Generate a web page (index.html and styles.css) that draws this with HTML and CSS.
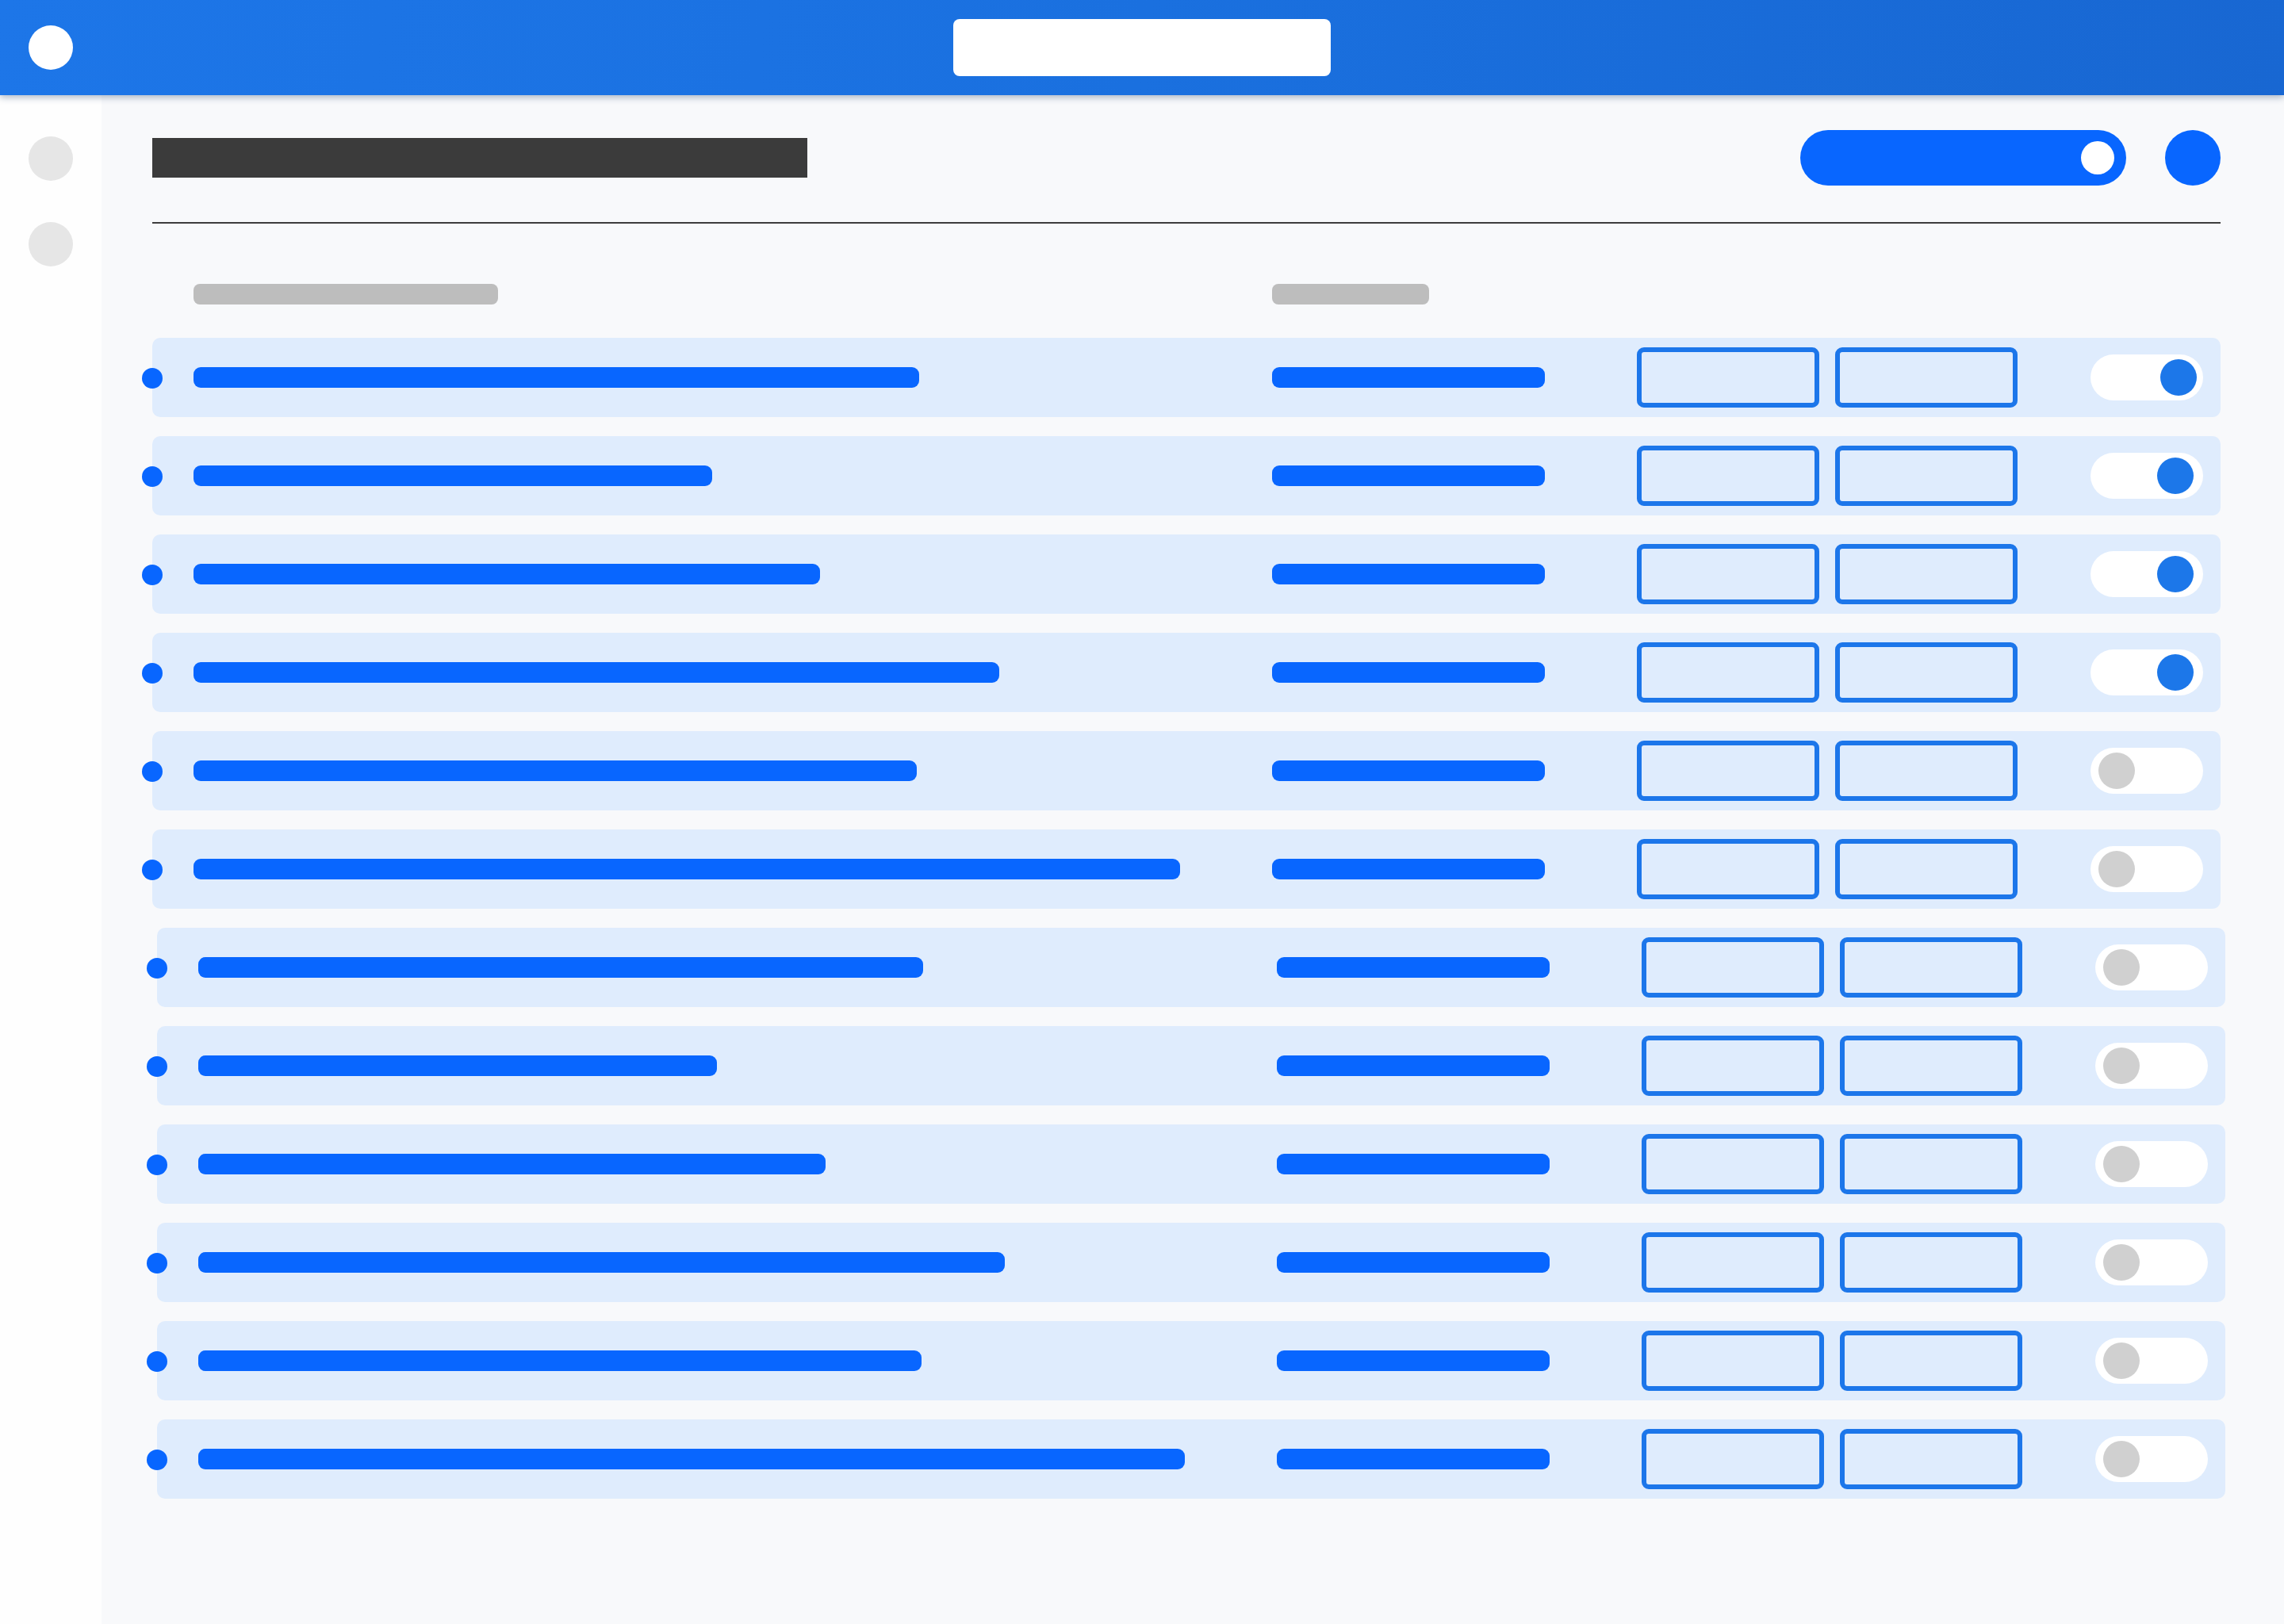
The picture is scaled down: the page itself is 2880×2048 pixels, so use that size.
FILE: index.html
```html
<!DOCTYPE html>
<html lang="en">
<head>
  <meta charset="UTF-8">
  <meta name="viewport" content="width=device-width, initial-scale=1.0">
  <title>Settings list</title>
  <link rel="stylesheet" href="styles.css">
</head>
<body>

  <!-- Barra superior -->
  <header class="topbar">
    <div class="topbar-left"><span class="logo"></span></div>
    <div class="search"></div>
    <div class="topbar-right"></div>
  </header>

  <div class="layout">
    <aside class="sidebar">
      <span class="nav-dot"></span>
      <span class="nav-dot"></span>
    </aside>

    <main class="content">
      <div class="page-head">
        <div class="title"></div>
        <div class="actions">
          <div class="pill"><span class="pill-knob"></span></div>
          <span class="avatar"></span>
        </div>
      </div>

      <div class="divider"></div>

      <div class="table-head">
        <div class="col-name"><span class="label label-name"></span></div>
        <div class="col-type"><span class="label label-type"></span></div>
      </div>

      <div class="rows">
        <div class="row">
          <span class="marker"></span>
          <div class="col-name"><span class="bar" style="width: 915px"></span></div>
          <div class="col-type"><span class="bar bar-type"></span></div>
          <span class="box"></span><span class="box"></span>
          <span class="switch on first"><span class="knob"></span></span>
        </div>
        <div class="row">
          <span class="marker"></span>
          <div class="col-name"><span class="bar" style="width: 654px"></span></div>
          <div class="col-type"><span class="bar bar-type"></span></div>
          <span class="box"></span><span class="box"></span>
          <span class="switch on"><span class="knob"></span></span>
        </div>
        <div class="row">
          <span class="marker"></span>
          <div class="col-name"><span class="bar" style="width: 790px"></span></div>
          <div class="col-type"><span class="bar bar-type"></span></div>
          <span class="box"></span><span class="box"></span>
          <span class="switch on"><span class="knob"></span></span>
        </div>
        <div class="row">
          <span class="marker"></span>
          <div class="col-name"><span class="bar" style="width: 1016px"></span></div>
          <div class="col-type"><span class="bar bar-type"></span></div>
          <span class="box"></span><span class="box"></span>
          <span class="switch on"><span class="knob"></span></span>
        </div>
        <div class="row">
          <span class="marker"></span>
          <div class="col-name"><span class="bar" style="width: 912px"></span></div>
          <div class="col-type"><span class="bar bar-type"></span></div>
          <span class="box"></span><span class="box"></span>
          <span class="switch"><span class="knob"></span></span>
        </div>
        <div class="row">
          <span class="marker"></span>
          <div class="col-name"><span class="bar" style="width: 1244px"></span></div>
          <div class="col-type"><span class="bar bar-type"></span></div>
          <span class="box"></span><span class="box"></span>
          <span class="switch"><span class="knob"></span></span>
        </div>
        <div class="row shifted">
          <span class="marker"></span>
          <div class="col-name"><span class="bar" style="width: 914px"></span></div>
          <div class="col-type"><span class="bar bar-type"></span></div>
          <span class="box"></span><span class="box"></span>
          <span class="switch"><span class="knob"></span></span>
        </div>
        <div class="row shifted">
          <span class="marker"></span>
          <div class="col-name"><span class="bar" style="width: 654px"></span></div>
          <div class="col-type"><span class="bar bar-type"></span></div>
          <span class="box"></span><span class="box"></span>
          <span class="switch"><span class="knob"></span></span>
        </div>
        <div class="row shifted">
          <span class="marker"></span>
          <div class="col-name"><span class="bar" style="width: 791px"></span></div>
          <div class="col-type"><span class="bar bar-type"></span></div>
          <span class="box"></span><span class="box"></span>
          <span class="switch"><span class="knob"></span></span>
        </div>
        <div class="row shifted">
          <span class="marker"></span>
          <div class="col-name"><span class="bar" style="width: 1017px"></span></div>
          <div class="col-type"><span class="bar bar-type"></span></div>
          <span class="box"></span><span class="box"></span>
          <span class="switch"><span class="knob"></span></span>
        </div>
        <div class="row shifted">
          <span class="marker"></span>
          <div class="col-name"><span class="bar" style="width: 912px"></span></div>
          <div class="col-type"><span class="bar bar-type"></span></div>
          <span class="box"></span><span class="box"></span>
          <span class="switch"><span class="knob"></span></span>
        </div>
        <div class="row shifted">
          <span class="marker"></span>
          <div class="col-name"><span class="bar" style="width: 1244px"></span></div>
          <div class="col-type"><span class="bar bar-type"></span></div>
          <span class="box"></span><span class="box"></span>
          <span class="switch"><span class="knob"></span></span>
        </div>
      </div>
    </main>
  </div>

</body>
</html>
```

FILE: styles.css
```css
/* General */
* {
  box-sizing: border-box;
}

body {
  margin: 0;
  font-family: 'Liberation Sans', Arial, sans-serif;
  background: #F8F9FB;
  min-height: 100vh;
}

/* Top bar */
.topbar {
  position: relative;
  z-index: 5;
  height: 120px;
  display: grid;
  grid-template-columns: 1fr 476px 1fr;
  align-items: center;
  background: linear-gradient(100deg, #1D76E8 0%, #1A70DF 50%, #1867D2 100%);
  box-shadow: 0 3px 8px rgba(30, 60, 100, 0.35);
}

.topbar-left {
  padding-left: 36px;
  display: flex;
  align-items: center;
}

.logo {
  width: 56px;
  height: 56px;
  border-radius: 50%;
  background: #fff;
}

.search {
  height: 72px;
  background: #fff;
  border-radius: 8px;
}

/* Layout */
.layout {
  display: flex;
  min-height: calc(100vh - 120px);
}

.sidebar {
  width: 128px;
  flex-shrink: 0;
  background: #FEFEFE;
  display: flex;
  flex-direction: column;
  align-items: center;
  gap: 52px;
  padding-top: 52px;
}

.nav-dot {
  width: 56px;
  height: 56px;
  border-radius: 50%;
  background: #E6E6E6;
}

.content {
  flex: 1;
  padding: 44px 80px 0 64px;
}

/* Page header */
.page-head {
  height: 70px;
  display: flex;
  align-items: center;
  justify-content: space-between;
}

.title {
  width: 826px;
  height: 50px;
  background: #3B3B3B;
}

.actions {
  display: flex;
  align-items: center;
  gap: 49px;
}

.pill {
  width: 411px;
  height: 70px;
  border-radius: 35px;
  background: #0866FF;
  display: flex;
  align-items: center;
  justify-content: flex-end;
  padding-right: 15px;
}

.pill-knob {
  width: 42px;
  height: 42px;
  border-radius: 50%;
  background: #fff;
}

.avatar {
  width: 70px;
  height: 70px;
  border-radius: 50%;
  background: #0866FF;
}

.divider {
  margin-top: 46px;
  height: 2px;
  background: #3D3D3D;
}

/* Table */
.table-head {
  margin-top: 76px;
  height: 26px;
  display: flex;
  align-items: center;
  padding-left: 52px;
}

.col-name {
  width: 1360px;
  flex-shrink: 0;
  display: flex;
}

.col-type {
  width: 460px;
  flex-shrink: 0;
  display: flex;
}

.label {
  height: 26px;
  border-radius: 8px;
  background: #BDBDBD;
}

.label-name {
  width: 384px;
}

.label-type {
  width: 198px;
}

.rows {
  margin-top: 42px;
  display: flex;
  flex-direction: column;
  gap: 24px;
}

.row {
  position: relative;
  height: 100px;
  display: flex;
  align-items: center;
  padding: 0 22px 0 52px;
  background: #DFECFD;
  border-radius: 10px;
}

.row.shifted {
  margin-left: 6px;
  margin-right: -6px;
}

/* Punto sobre el borde izquierdo */
.marker {
  position: absolute;
  left: -13px;
  top: 38px;
  width: 26px;
  height: 26px;
  border-radius: 50%;
  background: #0866FF;
}

.bar {
  height: 26px;
  border-radius: 9px;
  background: #0866FF;
}

.bar-type {
  width: 344px;
}

.box {
  width: 230px;
  height: 76px;
  flex-shrink: 0;
  border: 6px solid #1C76EA;
  border-radius: 9px;
}

.box + .box {
  margin-left: 20px;
}

.switch {
  margin-left: auto;
  width: 142px;
  height: 58px;
  border-radius: 29px;
  background: #fff;
  display: flex;
  align-items: center;
  padding: 0 10px;
}

.switch .knob {
  width: 46px;
  height: 46px;
  border-radius: 50%;
  background: #D0D0D0;
}

.switch.on {
  justify-content: flex-end;
  padding-right: 12px;
}

.switch.on.first {
  padding-right: 8px;
}

.switch.on .knob {
  background: #1C77E9;
}
```
